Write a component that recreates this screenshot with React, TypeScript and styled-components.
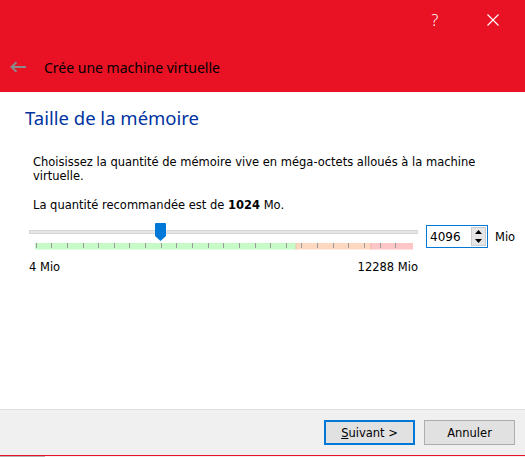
import React from "react";
import styled, { createGlobalStyle } from "styled-components";

const GlobalStyle = createGlobalStyle`
    html, body {
        margin: 0;
        padding: 0;
        background: #ffffff;
    }
    body {
        width: 525px;
        height: 457px;
        overflow: hidden;
    }
`;

const uiFont = `"DejaVu Sans", "Liberation Sans", sans-serif`;
const metroFont = `"Noto Sans", "Open Sans", sans-serif`;

const Window = styled.div`
    display: flex;
    flex-direction: column;
    width: 525px;
    height: 457px;
    background: #ffffff;
`;

const Header = styled.div`
    display: flex;
    flex-direction: column;
    height: 92px;
    background: #e81224;
`;

const CaptionBar = styled.div`
    display: flex;
    justify-content: flex-end;
    height: 40px;
`;

const CaptionButton = styled.div<{ $width: number }>`
    display: flex;
    align-items: center;
    justify-content: center;
    width: ${(props) => props.$width}px;
    color: #ffffff;
    font-family: ${metroFont};
    font-size: 16px;
    font-weight: 300;
`;

const TitleRow = styled.div`
    display: flex;
    align-items: center;
    gap: 18px;
    height: 40px;
    margin-top: 7px;
    padding-left: 10px;
`;

const HeaderTitle = styled.span`
    font-family: ${metroFont};
    font-size: 14px;
    color: #000000;
`;

const Body = styled.div`
    flex: 1;
    display: flex;
    flex-direction: column;
    padding: 12px 0 0 25px;
`;

const PageTitle = styled.h1`
    margin: 0;
    font-family: ${metroFont};
    font-size: 18.5px;
    font-weight: 400;
    line-height: 28px;
    color: #0033a0;
`;

const Content = styled.div`
    display: flex;
    flex-direction: column;
    padding: 23px 0 0 4px;
    width: 470px;
`;

const Paragraph = styled.p<{ $after: number }>`
    margin: 0 0 ${(props) => props.$after}px 4px;
    font-family: ${uiFont};
    font-size: 11.5px;
    line-height: 14px;
    color: #000000;
`;

const SliderRow = styled.div`
    display: flex;
    align-items: flex-start;
`;

const SliderArea = styled.div`
    display: flex;
    flex-direction: column;
    width: 389px;
`;

const TrackZone = styled.div`
    position: relative;
    display: flex;
    align-items: center;
    height: 20px;
`;

const Track = styled.div`
    flex: 1;
    height: 2px;
    background: #e6e6e6;
    border: 1px solid #d6d6d6;
`;

const Thumb = styled.svg`
    position: absolute;
    top: 1px;
`;

const Ticks = styled.svg`
    display: block;
`;

const Limits = styled.div`
    display: flex;
    justify-content: space-between;
    margin-top: 10px;
    font-family: ${uiFont};
    font-size: 11.5px;
    color: #000000;
`;

const SpinGroup = styled.div`
    display: flex;
    align-items: center;
    margin: 3px 0 0 8px;
`;

const SpinBox = styled.div`
    display: flex;
    align-items: center;
    justify-content: space-between;
    box-sizing: border-box;
    width: 62px;
    height: 23px;
    padding: 0 1px 0 3px;
    border: 1px solid #0078d7;
    font-family: ${uiFont};
    font-size: 12px;
`;

const SpinArrows = styled.div`
    display: flex;
    flex-direction: column;
    box-sizing: border-box;
    width: 15px;
    height: 19px;
    background: #e5e5e5;
    border: 1px solid #cccccc;
`;

const SpinArrow = styled.div`
    flex: 1;
    display: flex;
    align-items: center;
    justify-content: center;
`;

const Unit = styled.span`
    margin-left: 7px;
    font-family: ${uiFont};
    font-size: 11.5px;
`;

const Footer = styled.div`
    display: flex;
    justify-content: flex-end;
    align-items: center;
    gap: 9px;
    height: 45px;
    padding-right: 10px;
    background: #f0f0f0;
    border-top: 1px solid #dfdfdf;
    border-bottom: 1px solid #e81224;
`;

const BottomEdge = styled.div`
    display: flex;
    height: 1px;
    background: #f0f0f0;
`;

const EdgeShade = styled.div`
    width: 45px;
    background: #b4b4b4;
`;

const DialogButton = styled.button<{ $default?: boolean }>`
    box-sizing: border-box;
    width: 91px;
    height: 25px;
    margin: 0;
    padding: 0;
    background: #e1e1e1;
    border: ${(props) => (props.$default ? "2px solid #0078d7" : "1px solid #adadad")};
    font-family: ${uiFont};
    font-size: 11.5px;
    color: #000000;
`;

const BackArrow = () => (
    <svg width="16" height="12" viewBox="0 0 16 12">
        <path d="M16 6 H2 M6.5 1.2 L1.5 6 L6.5 10.8" fill="none" stroke="#8a8a8a" strokeWidth="2" />
    </svg>
);

const CloseGlyph = () => (
    <svg width="12" height="12" viewBox="0 0 12 12">
        <path d="M0.5 0.5 L11.5 11.5 M11.5 0.5 L0.5 11.5" stroke="#ffffff" strokeWidth="1.1" />
    </svg>
);

// ticks every 512 Mio, from 0 to 12288
const TickBand = () => {
    const start = 6;
    const step = 15.63;
    const ticks = Array.from({ length: 24 }, (_, k) => start + 0.7 + k * step);
    return (
        <Ticks width="389" height="8" viewBox="0 0 389 8">
            <rect x="6" y="1" width="261" height="6.5" fill="#c6fac6" />
            <rect x="267" y="1" width="75" height="6.5" fill="#fdd8c0" />
            <rect x="342" y="1" width="42" height="6.5" fill="#fec6c6" />
            <rect x="266.5" y="1" width="1" height="6.5" fill="#e8c8a8" />
            <rect x="341.5" y="1" width="1" height="6.5" fill="#f0b0b0" />
            {ticks.map((x) => (
                <rect key={x} x={Math.round(x)} y="1" width="1" height="5" fill="#9a9a9a" />
            ))}
        </Ticks>
    );
};

const App = () => {
    const value = 4096;
    const thumbLeft = 6.7 + (value / 512) * 15.63 - 5.5;

    return (
        <Window>
            <GlobalStyle />
            <Header>
                <CaptionBar>
                    <CaptionButton $width={52}>?</CaptionButton>
                    <CaptionButton $width={64}>
                        <CloseGlyph />
                    </CaptionButton>
                </CaptionBar>
                <TitleRow>
                    <BackArrow />
                    <HeaderTitle>Crée une machine virtuelle</HeaderTitle>
                </TitleRow>
            </Header>
            <Body>
                <PageTitle>Taille de la mémoire</PageTitle>
                <Content>
                    <Paragraph $after={15}>
                        Choisissez la quantité de mémoire vive en méga-octets alloués à la machine virtuelle.
                    </Paragraph>
                    <Paragraph $after={10}>
                        La quantité recommandée est de <b>1024</b> Mo.
                    </Paragraph>
                    <SliderRow>
                        <SliderArea>
                            <TrackZone>
                                <Track />
                                <Thumb width="11" height="18" viewBox="0 0 11 18" style={{ left: thumbLeft }}>
                                    <path d="M0 1 Q0 0 1 0 H10 Q11 0 11 1 V13 L5.5 18 L0 13 Z" fill="#0078d7" />
                                </Thumb>
                            </TrackZone>
                            <TickBand />
                            <Limits>
                                <span>4 Mio</span>
                                <span>12288 Mio</span>
                            </Limits>
                        </SliderArea>
                        <SpinGroup>
                            <SpinBox>
                                <span>4096</span>
                                <SpinArrows>
                                    <SpinArrow>
                                        <svg width="7" height="4" viewBox="0 0 7 4">
                                            <path d="M0 4 L3.5 0 L7 4 Z" fill="#000000" />
                                        </svg>
                                    </SpinArrow>
                                    <SpinArrow>
                                        <svg width="7" height="4" viewBox="0 0 7 4">
                                            <path d="M0 0 L3.5 4 L7 0 Z" fill="#000000" />
                                        </svg>
                                    </SpinArrow>
                                </SpinArrows>
                            </SpinBox>
                            <Unit>Mio</Unit>
                        </SpinGroup>
                    </SliderRow>
                </Content>
            </Body>
            <Footer>
                <DialogButton $default>
                    <u>S</u>uivant &gt;
                </DialogButton>
                <DialogButton>Annuler</DialogButton>
            </Footer>
            <BottomEdge>
                <EdgeShade />
            </BottomEdge>
        </Window>
    );
};

export default App;
